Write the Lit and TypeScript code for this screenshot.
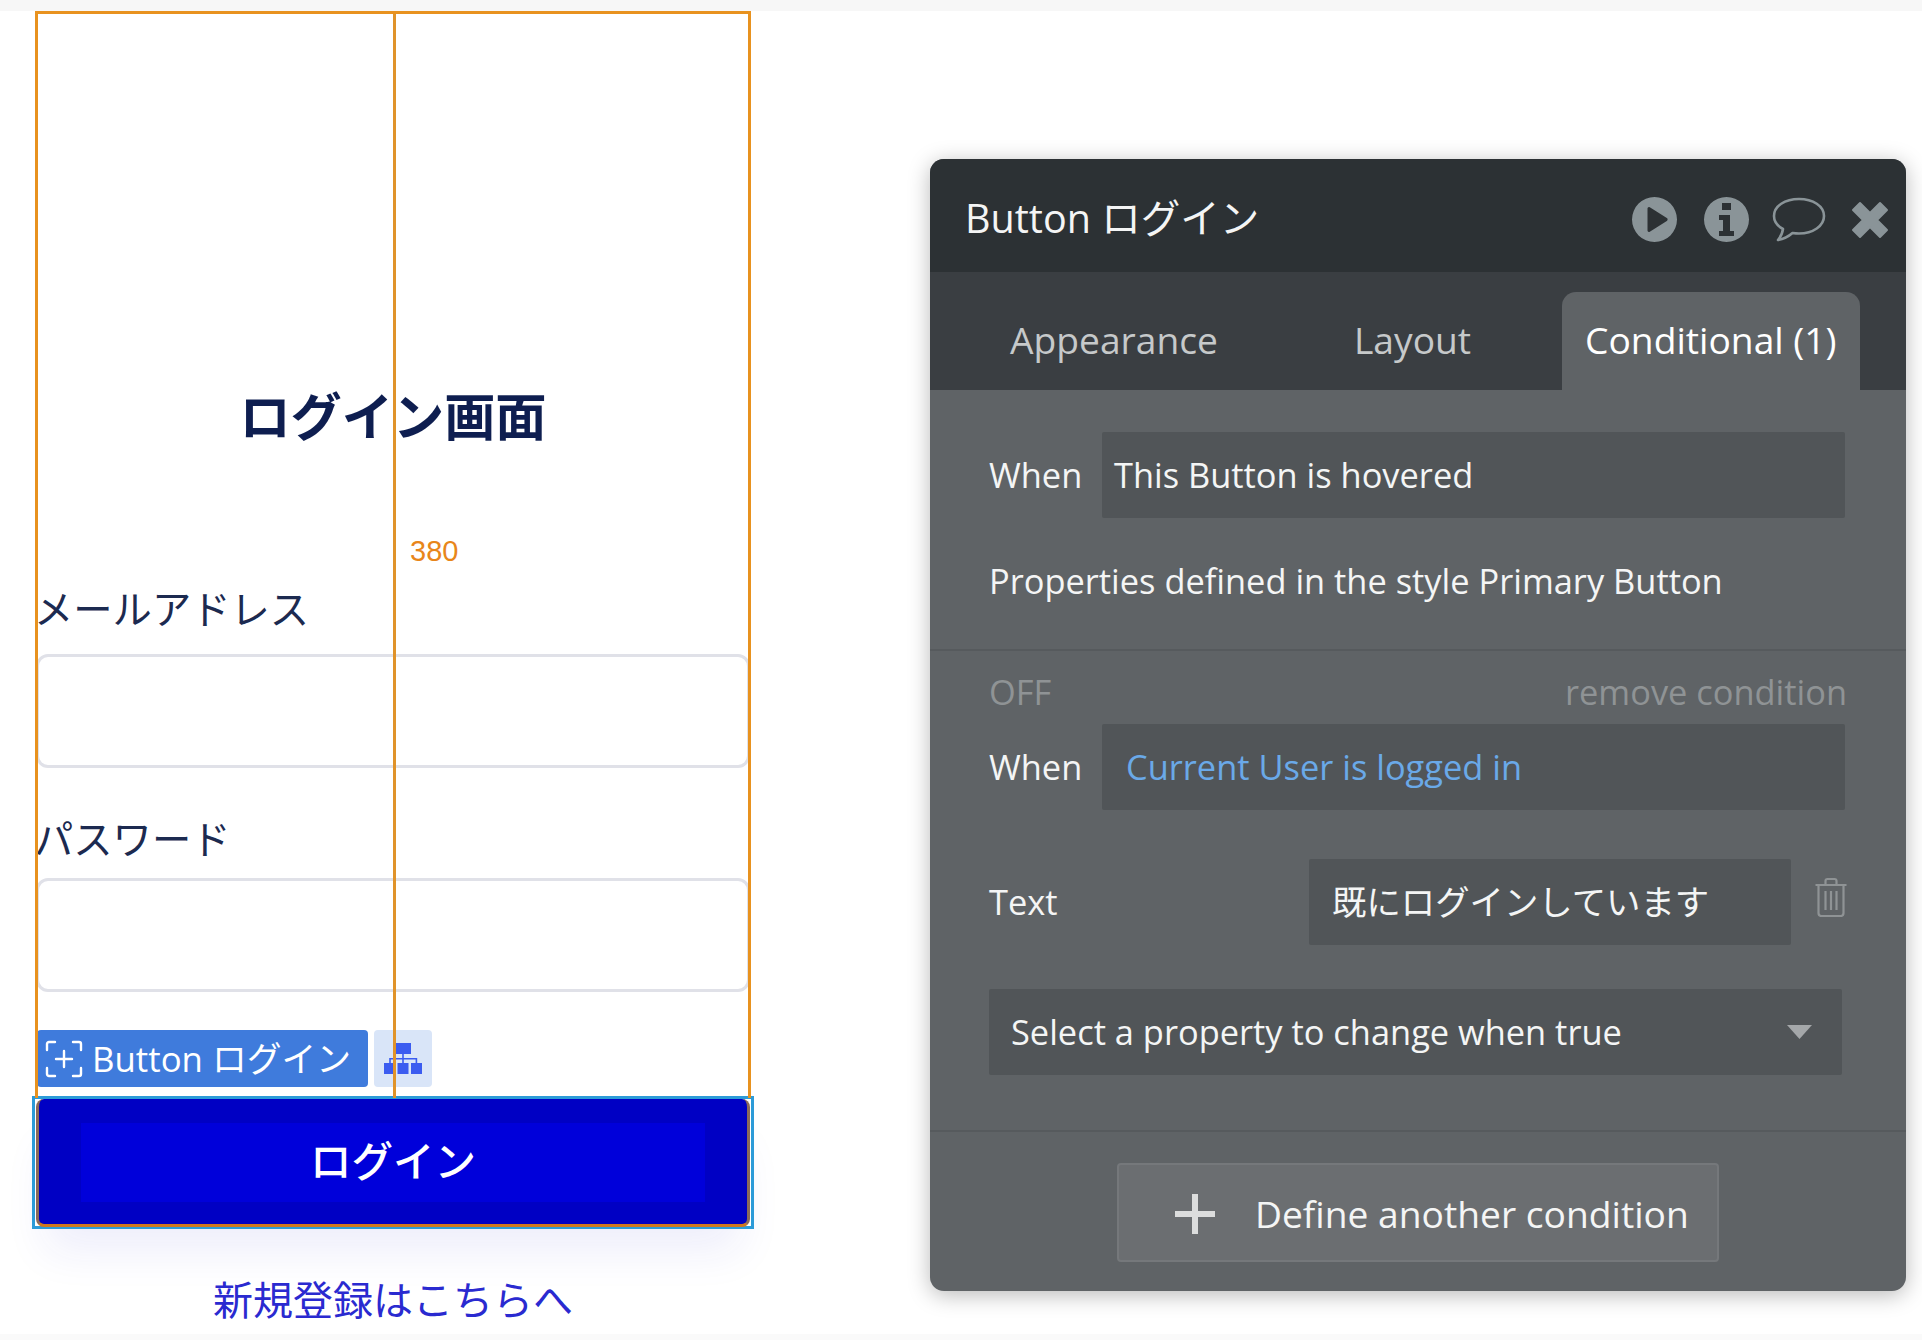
import { LitElement, html, css } from "lit";
import { customElement } from "lit/decorators.js";

@customElement("app-root")
export class AppRoot extends LitElement {
  static styles = css`
    :host { display: block; width: 1922px; height: 1340px; background: linear-gradient(#fff 1334px, #fafafa 1334px); overflow: hidden;
      font-family: "Noto Sans CJK JP", "Liberation Sans", sans-serif; }
    * { box-sizing: border-box; }
    .band { height: 11px; background: #f7f7f7; }
    .main { display: flex; padding-left: 37px; }
    .form { position: relative; width: 712px; display: flex; flex-direction: column; }
    .guide { position: absolute; left: -2px; top: 0; width: 716px; height: 1087px; border: 3px solid #e8921f; border-bottom: none; pointer-events: none; }
    .guide::after { content: ""; position: absolute; left: 355px; top: 0; bottom: 0; width: 3px; background: #e0932a; }
    .dim { position: absolute; left: 373px; top: 524px; font: 29px/32px "Liberation Sans", sans-serif; color: #e8861a; }
    h1 { margin: 373px 0 0; font-size: 51.2px; line-height: 60px; font-weight: 700; text-align: center; color: #0e1e50; }
    .label { margin-left: -3px; font-size: 39.3px; line-height: 50px; color: #1c2a50; white-space: nowrap; }
    .l1 { margin-top: 138px; }
    .l2 { margin-top: 44px; }
    .field { margin: 0 -1px; height: 114px; border: 3px solid #e0e1e8; border-radius: 12px; background: #fff; }
    .f1 { margin-top: 22px; }
    .f2 { margin-top: 16px; }
    .tagrow { display: flex; gap: 6px; margin-top: 38px; height: 57px; }
    .tag { width: 331px; border-radius: 4px; background: #3f7bdc; color: #fff; display: flex; align-items: center; gap: 9px; padding-left: 8px;
      font: 34.8px/57px "Open Sans", "Noto Sans CJK JP", sans-serif; white-space: nowrap; }
    .tree { width: 58px; border-radius: 4px; background: #d9e5f8; display: flex; align-items: center; justify-content: center; }
    .selbox { margin: 9px -5px 0; height: 133px; border: 3px solid #2c9bd8; padding: 0 1px 2px; box-shadow: 0 36px 44px -14px rgba(40,40,200,.08); }
    .login { height: 128px; background: #0000c4; border: 3px solid #d0781e; border-top: none; border-left-color: #8a6a5a; border-right-color: #8a6a5a; border-radius: 8px; padding: 24px 42px 22px; display: flex; }
    .login div { flex: 1; background: #0000da; color: #fff; font-size: 41.5px; font-weight: 500; display: flex; align-items: center; justify-content: center; padding-bottom: 8px; }
    .link { margin-top: 44px; font-size: 40px; line-height: 50px; text-align: center; color: #2a2ad0; white-space: nowrap; }

    .panel { margin: 148px 0 0 181px; width: 976px; height: 1132px; border-radius: 14px; overflow: hidden; background: #5f6366;
      box-shadow: 0 4px 22px rgba(0,0,0,.28); font: 34.4px/44px "Open Sans", "Noto Sans CJK JP", sans-serif; color: #f4f5f5; }
    .head { height: 113px; background: #2c3134; display: flex; align-items: center; padding: 0 17px 0 35px; }
    .head .name { font-size: 39.5px; margin-top: 4px; white-space: nowrap; }
    .icons { margin-left: auto; display: flex; align-items: center; gap: 25px; padding-top: 8px; }
    .icons svg { display: block; }
    .icons .info { margin: 0 -2px 0 2px; }
    .tabs { height: 118px; background: #3a3e42; display: flex; align-items: flex-end; padding-left: 56px; }
    .tab { height: 98px; padding: 0 24px 2px; display: flex; align-items: center; color: #c6c9ca; font-size: 37.2px; white-space: nowrap; }
    .t2 { margin-left: 88px; }
    .t3 { margin-left: 67px; padding: 0 23px 2px; color: #fff; background: #5f6366; border-radius: 14px 14px 0 0; }
    .sec { padding-left: 59px; border-bottom: 2px solid #565a5d; }
    .s1 { padding-top: 42px; padding-bottom: 46px; }
    .s2 { padding-top: 21px; padding-bottom: 55px; }
    .row { display: flex; align-items: center; height: 86px; }
    .row .k { width: 113px; flex: none; }
    .box { background: #515558; height: 86px; display: flex; align-items: center; border-radius: 2px; white-space: nowrap; }
    .wide { width: 743px; padding-left: 12px; }
    .dyn { padding-left: 24px; color: #6aa9e8; }
    .props { margin-top: 41px; white-space: nowrap; }
    .offrow { display: flex; justify-content: space-between; width: 858px; color: #8f9395; line-height: 40px; height: 40px; margin-bottom: 12px; }
    .textrow { margin-top: 49px; }
    .textrow .k { width: 320px; }
    .textval { width: 482px; padding-left: 23px; }
    .trash { margin-left: 23px; margin-top: -10px; display: block; }
    .select { width: 853px; margin-top: 44px; padding: 0 30px 0 22px; justify-content: space-between; }
    .s3 { padding: 31px 0 0 187px; }
    .add { width: 602px; height: 99px; background: #6b6e71; border: 2px solid #75787b; border-radius: 4px; display: flex; align-items: center; padding: 2px 0 0 56px; gap: 40px; white-space: nowrap; font-size: 37.2px; }
  `;

  render() {
    return html`
      <div class="band"></div>
      <div class="main">
        <div class="form">
          <h1>ログイン画面</h1>
          <div class="label l1">メールアドレス</div>
          <div class="field f1"></div>
          <div class="label l2">パスワード</div>
          <div class="field f2"></div>
          <div class="tagrow">
            <div class="tag">
              <svg width="38" height="38" viewBox="0 0 38 38" fill="none" stroke="#fff" stroke-width="2.4" stroke-linecap="round">
                <path d="M2 10V4a2 2 0 0 1 2-2h6M28 2h6a2 2 0 0 1 2 2v6M36 28v6a2 2 0 0 1-2 2h-6M10 36H4a2 2 0 0 1-2-2v-6M19 11v16M11 19h16"/>
              </svg>
              <span>Button ログイン</span>
            </div>
            <div class="tree">
              <svg width="38" height="32" viewBox="0 0 38 32" fill="#3b5cf0">
                <rect x="11" y="0" width="16" height="11"/>
                <rect x="0" y="20" width="11" height="11"/><rect x="13.5" y="20" width="11" height="11"/><rect x="27" y="20" width="11" height="11"/>
                <path d="M18.2 11h1.6v4h13.4v5h-1.6v-3.4H19.8V20h-1.6v-3.4H6.8V20H5.2v-5h13z"/>
              </svg>
            </div>
          </div>
          <div class="selbox"><div class="login"><div>ログイン</div></div></div>
          <div class="link">新規登録はこちらへ</div>
          <div class="guide"></div>
          <div class="dim">380</div>
        </div>
        <div class="panel">
          <div class="head">
            <div class="name">Button ログイン</div>
            <div class="icons">
              <svg width="45" height="45" viewBox="0 0 45 45"><path fill="#8a9498" fill-rule="evenodd" d="M22.5 0a22.5 22.5 0 1 1 0 45a22.5 22.5 0 1 1 0-45zM15.5 11.5v22a1.5 1.5 0 0 0 2.3 1.2l17-10.8a1.6 1.6 0 0 0 0-2.8l-17-10.8a1.5 1.5 0 0 0-2.3 1.2z"/></svg>
              <svg class="info" width="45" height="45" viewBox="0 0 45 45"><path fill="#8a9498" fill-rule="evenodd" d="M22.5 0a22.5 22.5 0 1 1 0 45a22.5 22.5 0 1 1 0-45zM18 6v7h9V6zM15 18v5h4v11h-4v5h15v-5h-4V18z"/></svg>
              <svg width="54" height="46" viewBox="0 0 54 46" fill="none" stroke="#8a9498" stroke-width="2.6" stroke-linejoin="round"><path d="M27 2C13 2 2 9 2 19c0 5.500 3.500 10 9 13-.5 4-2.500 8-5 11 5.500-1 10.500-3.500 14.500-7 2 .3 4.300.5 6.500.5 14 0 25-7.500 25-17.500S41 2 27 2z"/></svg>
              <svg width="38" height="38" viewBox="0 0 38 38"><path fill="#8a9498" stroke="#8a9498" stroke-width="2" stroke-linejoin="round" d="M9 2 19 12 29 2l7 7-10 10 10 10-7 7-10-10L9 36l-7-7 10-10L2 9z"/></svg>
            </div>
          </div>
          <div class="tabs">
            <div class="tab">Appearance</div>
            <div class="tab t2">Layout</div>
            <div class="tab t3">Conditional (1)</div>
          </div>
          <div class="sec s1">
            <div class="row"><span class="k">When</span><div class="box wide">This Button is hovered</div></div>
            <div class="props">Properties defined in the style Primary Button</div>
          </div>
          <div class="sec s2">
            <div class="offrow"><span>OFF</span><span>remove condition</span></div>
            <div class="row"><span class="k">When</span><div class="box wide dyn">Current User is logged in</div></div>
            <div class="row textrow">
              <span class="k">Text</span>
              <div class="box textval">既にログインしています</div>
              <svg class="trash" width="34" height="40" viewBox="0 0 33 40" fill="none" stroke="#8f9395" stroke-width="2.2" stroke-linejoin="round"><path d="M1 8h31M11 8V4a2 2 0 0 1 2-2h7a2 2 0 0 1 2 2v4M4 8v28a3 3 0 0 0 3 3h19a3 3 0 0 0 3-3V8M11 14v19M16.500 14v19M22 14v19"/></svg>
            </div>
            <div class="box select">
              <span>Select a property to change when true</span>
              <svg width="25" height="14" viewBox="0 0 25 14"><path fill="#a4a7a9" d="M0 0h25L12.500 14z"/></svg>
            </div>
          </div>
          <div class="s3">
            <div class="add">
              <svg width="40" height="40" viewBox="0 0 40 40"><path fill="#dcdddd" d="M17 0h6v17h17v6H23v17h-6V23H0v-6h17z"/></svg>
              <span>Define another condition</span>
            </div>
          </div>
        </div>
      </div>
    `;
  }
}
